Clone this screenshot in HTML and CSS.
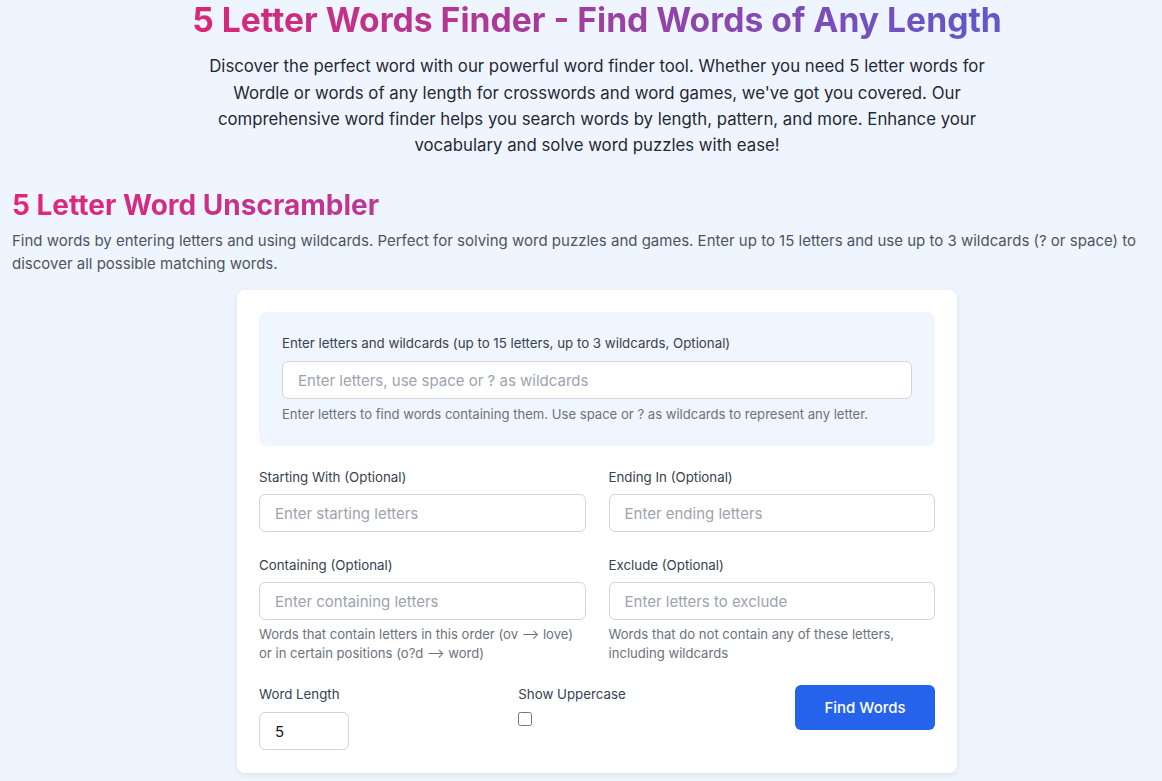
FILE: index.html
```html
<!DOCTYPE html>
<html>
	<head>
		<title>5 Letter Words Finder</title>
		<link rel="stylesheet" href="styles.css">
	</head>
	<body>
		<div id="page">
			<header class="intro">
				<h1><span class="grad">5 Letter Words Finder - Find Words of Any Length</span></h1>
				<p>Discover the perfect word with our powerful word finder tool. Whether you need 5 letter words for Wordle or words of any length for crosswords and word games, we've got you covered. Our comprehensive word finder helps you search words by length, pattern, and more. Enhance your vocabulary and solve word puzzles with ease!</p>
			</header>

			<section class="tool">
				<h2 class="section_title">5 Letter Word Unscrambler</h2>
				<p class="section_desc">Find words by entering letters and using wildcards. Perfect for solving word puzzles and games. Enter up to 15 letters and use up to 3 wildcards (? or space) to discover all possible matching words.</p>

				<form class="card">
					<div class="letters_box">
						<label for="letters">Enter letters and wildcards (up to 15 letters, up to 3 wildcards, Optional)</label>
						<input type="text" id="letters" placeholder="Enter letters, use space or ? as wildcards">
						<div class="hint">Enter letters to find words containing them. Use space or ? as wildcards to represent any letter.</div>
					</div>

					<div class="grid">
						<div class="field">
							<label for="start">Starting With (Optional)</label>
							<input type="text" id="start" placeholder="Enter starting letters">
						</div>
						<div class="field">
							<label for="end">Ending In (Optional)</label>
							<input type="text" id="end" placeholder="Enter ending letters">
						</div>
						<div class="field">
							<label for="contain">Containing (Optional)</label>
							<input type="text" id="contain" placeholder="Enter containing letters">
							<div class="hint">Words that contain letters in this order (ov &#10230; love) or in certain positions (o?d &#10230; word)</div>
						</div>
						<div class="field">
							<label for="exclude">Exclude (Optional)</label>
							<input type="text" id="exclude" placeholder="Enter letters to exclude">
							<div class="hint">Words that do not contain any of these letters, including wildcards</div>
						</div>
					</div>

					<div class="bottom_row">
						<div class="field">
							<label for="length">Word Length</label>
							<input type="text" id="length" class="length_input" value="5">
						</div>
						<div class="field">
							<label for="upper">Show Uppercase</label>
							<input type="checkbox" id="upper" class="check">
						</div>
						<button type="button" class="find_btn">Find Words</button>
					</div>
				</form>

				<h2 class="section_title">5 Letter Unscrambled Words</h2>
			</section>
		</div>
	</body>
</html>
```

FILE: styles.css
```css
html {
	overflow-x: hidden;
}

body {
	margin: 0;
	background: #eff5fe;
	font-family: Inter, "Noto Sans", sans-serif;
	color: #1f2937;
}

#page {
	width: 1170px;
	margin-left: 12px;
}

.intro {
	text-align: center;
}

.intro h1 {
	margin: -1px 0 0 0;
	font-size: 33.7px;
	font-weight: 700;
	line-height: 1.25;
}

.grad {
	background: linear-gradient(90deg, #db2777, #5f58cc);
	-webkit-background-clip: text;
	background-clip: text;
	color: transparent;
}

.intro p {
	width: 800px;
	margin: 12px auto 0;
	font-size: 16.8px;
	line-height: 26.4px;
	color: #1f2937;
}

.section_title {
	margin: 28px 0 0;
	font-size: 28px;
	font-weight: 700;
	line-height: 1.3;
	background: linear-gradient(90deg, #e0267a, #6360d4);
	-webkit-background-clip: text;
	background-clip: text;
	color: transparent;
}

.section_desc {
	margin: 6px 0 0;
	font-size: 15px;
	line-height: 23px;
	color: #4b5563;
}

.card {
	width: 676px;
	margin: 15px auto 0;
	padding: 22px 22px 23px;
	background: #fff;
	border-radius: 8px;
	box-shadow: 0 2px 6px rgba(0, 0, 0, 0.08);
}

label {
	display: block;
	font-size: 13.3px;
	font-weight: 400;
	color: #374151;
	margin-bottom: 9px;
}

.letters_box label {
	margin-bottom: 10px;
}

.bottom_row label {
	margin-bottom: 10px;
}

input[type="text"] {
	display: block;
	box-sizing: border-box;
	width: 100%;
	height: 38px;
	padding: 0 15px;
	border: 1px solid #d1d5db;
	border-radius: 6px;
	font-family: inherit;
	font-size: 15px;
	color: #111827;
	background: #fff;
}

input::placeholder {
	color: #9ca3af;
}

.hint {
	margin-top: 5px;
	font-size: 13.1px;
	line-height: 19px;
	color: #6b7280;
}

.letters_box .hint {
	margin-top: 6px;
}

.letters_box {
	background: #eff6ff;
	border-radius: 8px;
	padding: 23px 23px 22px;
}

.grid {
	display: grid;
	grid-template-columns: 1fr 1fr;
	column-gap: 23px;
	row-gap: 25px;
	margin-top: 23px;
}

.bottom_row {
	display: flex;
	justify-content: space-between;
	align-items: flex-start;
	margin-top: 23px;
}

.length_input {
	width: 90px !important;
}

.check {
	display: block;
	width: 14px;
	height: 14px;
	margin: 0;
}

.find_btn {
	width: 140px;
	height: 45px;
	margin-top: -1px;
	border: none;
	border-radius: 6px;
	background: #2563eb;
	color: #fff;
	font-family: inherit;
	font-size: 15px;
	font-weight: 500;
}
```
